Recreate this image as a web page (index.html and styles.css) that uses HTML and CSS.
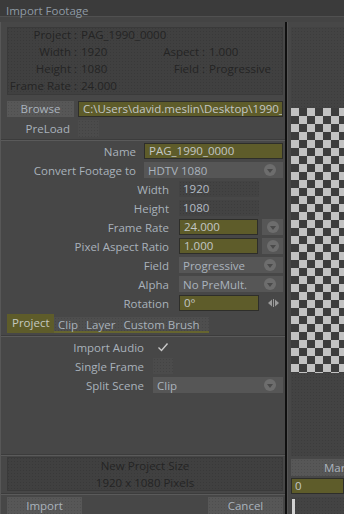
FILE: index.html
```html
<!DOCTYPE html>
<html>
<head>
<meta charset="utf-8">
<link rel="stylesheet" href="styles.css">
</head>
<body>
<div class="titlebar">Import Footage</div>
<div class="title-gap"></div>
<div class="main">
  <div class="left">
    <div class="info tex">
      <span class="ilbl">Project :</span><span class="ival wide">PAG_1990_0000</span>
      <span class="ilbl">Width :</span><span class="ival">1920</span><span class="ilbl">Aspect :</span><span class="ival">1.000</span>
      <span class="ilbl">Height :</span><span class="ival">1080</span><span class="ilbl">Field :</span><span class="ival">Progressive</span>
      <span class="ilbl">Frame Rate :</span><span class="ival wide">24.000</span>
    </div>

    <div class="brow">
      <div class="btn tex browse">Browse</div>
      <div class="olive path">C:\Users\david.meslin\Desktop\1990_0000</div>
    </div>
    <div class="prow">
      <span class="lbl lbl-pre">PreLoad</span>
      <span class="chk tex"></span>
    </div>

    <div class="sep"></div>

    <div class="frow">
      <span class="lbl lbl-a">Name</span>
      <div class="olive grow">PAG_1990_0000</div>
    </div>
    <div class="frow">
      <span class="lbl lbl-a">Convert Footage to</span>
      <div class="dd grow"><span>HDTV 1080</span><span class="circ"></span></div>
    </div>
    <div class="frow">
      <span class="lbl lbl-b">Width</span>
      <div class="dark tex fld">1920</div>
    </div>
    <div class="frow">
      <span class="lbl lbl-b">Height</span>
      <div class="dark tex fld">1080</div>
    </div>
    <div class="frow">
      <span class="lbl lbl-b">Frame Rate</span>
      <div class="olive fld">24.000</div>
      <div class="cbtn"><span class="circ"></span></div>
    </div>
    <div class="frow">
      <span class="lbl lbl-b">Pixel Aspect Ratio</span>
      <div class="olive fld">1.000</div>
      <div class="cbtn"><span class="circ"></span></div>
    </div>
    <div class="frow">
      <span class="lbl lbl-b">Field</span>
      <div class="dd grow"><span>Progressive</span><span class="circ"></span></div>
    </div>
    <div class="frow">
      <span class="lbl lbl-b">Alpha</span>
      <div class="dd grow"><span>No PreMult.</span><span class="circ"></span></div>
    </div>
    <div class="frow">
      <span class="lbl lbl-b">Rotation</span>
      <div class="olive fld">0°</div>
      <svg class="spin" width="11" height="8" viewBox="0 0 11 8">
        <path d="M0 4L4 0.5V7.5Z" fill="#9a9a9a"/>
        <rect x="5" y="0" width="1" height="8" fill="#9a9a9a"/>
        <path d="M11 4L7 0.5V7.5Z" fill="#9a9a9a"/>
      </svg>
    </div>

    <div class="tabs">
      <div class="tab active">Project</div>
      <div class="tabstrip tex">
        <span class="tab">Clip</span>
        <span class="tab">Layer</span>
        <span class="tab">Custom Brush</span>
      </div>
    </div>

    <div class="sep"></div>

    <div class="frow">
      <span class="lbl lbl-c">Import Audio</span>
      <span class="chk checked">
        <svg width="12" height="10" viewBox="0 0 12 10"><path d="M1.5 5.5L4.5 8.5L10.5 1.5" fill="none" stroke="#c9c9c9" stroke-width="1.4"/></svg>
      </span>
    </div>
    <div class="frow">
      <span class="lbl lbl-c">Single Frame</span>
      <span class="chk tex"></span>
    </div>
    <div class="frow">
      <span class="lbl lbl-c">Split Scene</span>
      <div class="dd grow"><span>Clip</span><span class="circ"></span></div>
    </div>

    <div class="spacer"></div>
    <div class="sep sep-b"></div>

    <div class="newsize tex">
      <div>New Project Size</div>
      <div>1920 x 1080 Pixels</div>
    </div>

    <div class="sep sep-c"></div>

    <div class="buttons">
      <div class="btn tex bbtn">Import</div>
      <div class="btn tex bbtn">Cancel</div>
    </div>
  </div>

  <div class="divider"></div>

  <div class="right">
    <div class="rtop tex"></div>
    <div class="checker"></div>
    <div class="rbot tex"></div>
    <div class="btn tex mar">Mar</div>
    <div class="olive rfield">0</div>
    <div class="slider tex"><span class="handle"></span></div>
  </div>
</div>
</body>
</html>
```

FILE: styles.css
```css
html, body {
  margin: 0;
  padding: 0;
}

body {
  width: 344px;
  height: 514px;
  overflow: hidden;
  background: #474747;
  font-family: "Open Sans", "Noto Sans", sans-serif;
  font-size: 11.5px;
  color: #a9b2bb;
}

.tex {
  background-image: radial-gradient(rgba(0, 0, 0, 0.10) 0.7px, transparent 0.9px);
  background-size: 3px 3px;
}

.titlebar {
  box-sizing: border-box;
  height: 17px;
  line-height: 17px;
  padding: 2px 0 0 6px;
  background: #3b3b3b;
  color: #8f9aa4;
  border-bottom: 1px solid #505050;
  overflow: visible;
}

.title-gap {
  height: 5px;
  background: #444444;
}

.main {
  display: flex;
  height: 492px;
}

.left {
  box-sizing: border-box;
  width: 285px;
  padding: 0 2px 0 6px;
  border-left: 1px solid #575757;
  display: flex;
  flex-direction: column;
}

.divider {
  width: 2px;
  background: #101010;
}

.right {
  box-sizing: border-box;
  width: 57px;
  padding-left: 3px;
  display: flex;
  flex-direction: column;
  border-left: 1px solid #545454;
}

/* info box */
.info {
  margin-top: 5px;
  height: 68px;
  box-sizing: border-box;
  background-color: #404040;
  box-shadow: inset 0 0 0 1px #3a3a3a;
  display: grid;
  grid-template-columns: 70px 61px 67px 1fr;
  grid-auto-rows: 17px;
  align-items: start;
  line-height: 15px;
  color: #242424;
  white-space: nowrap;
}

.ilbl {
  text-align: right;
}

.ival {
  padding-left: 4px;
}

.ival.wide {
  grid-column: 2 / 5;
}

/* generic widgets */
.btn {
  background-color: #575757;
  color: #aab3bd;
  text-align: center;
  line-height: 16px;
}

.olive {
  box-sizing: border-box;
  background: #5e5c2a;
  border: 1px solid #2e2e2a;
  color: #c3c7c6;
  padding-left: 3px;
  line-height: 14px;
  white-space: nowrap;
  overflow: hidden;
}

.dark {
  box-sizing: border-box;
  background-color: #434343;
  color: #b3bcc5;
  padding-left: 4px;
  line-height: 16px;
}

.dd {
  box-sizing: border-box;
  background: #565656;
  color: #aab3bd;
  padding: 0 7px 0 4px;
  display: flex;
  align-items: center;
  justify-content: space-between;
  height: 16px;
}

.circ {
  width: 12px;
  height: 12px;
  border-radius: 50%;
  background: #6d6d6d;
  display: flex;
  align-items: center;
  justify-content: center;
}

.circ::after {
  content: "";
  width: 0;
  height: 0;
  margin-top: 1px;
  border-left: 3.5px solid transparent;
  border-right: 3.5px solid transparent;
  border-top: 4px solid #4a4a4a;
}

.cbtn {
  width: 21px;
  height: 16px;
  margin-left: 4px;
  background: #565656;
  display: flex;
  align-items: center;
  justify-content: center;
}

.chk {
  width: 20px;
  height: 16px;
  background-color: #4b4b4b;
  display: flex;
  align-items: center;
  justify-content: center;
}

.chk.checked {
  background: transparent;
}

/* rows */
.brow {
  display: flex;
  margin-top: 6px;
  height: 16px;
}

.browse {
  width: 67px;
}

.path {
  flex: 1;
  margin-left: 4px;
  padding-left: 4px;
  line-height: 14px;
}

.prow {
  display: flex;
  align-items: center;
  margin-top: 3px;
  height: 17px;
}

.lbl {
  text-align: right;
  white-space: nowrap;
  flex: none;
}

.lbl-pre {
  width: 63px;
  margin-right: 8px;
}

.prow .chk {
  width: 21px;
  height: 17px;
}

.sep {
  margin: 2px -2px 0 -6px;
  height: 0;
  border-top: 1px solid #3c3c3c;
  border-bottom: 1px solid #5a5a5a;
}

.frow {
  display: flex;
  align-items: center;
  margin-top: 3px;
  height: 16px;
}

.sep + .frow {
  margin-top: 2px;
}

.lbl-a {
  width: 129px;
  margin-right: 8px;
}

.lbl-b {
  width: 162px;
  margin-right: 10px;
}

.lbl-c {
  width: 137px;
  margin-right: 9px;
}

.grow {
  flex: 1;
  height: 16px;
}

.frow .olive {
  height: 16px;
  padding-left: 4px;
}

.fld {
  width: 80px;
  height: 16px;
}

.spin {
  margin-left: 9px;
}

/* tabs */
.tabs {
  display: flex;
  align-items: flex-end;
  margin-top: 3px;
  height: 19px;
}

.tab.active {
  box-sizing: border-box;
  width: 47px;
  height: 19px;
  line-height: 18px;
  padding-left: 5px;
  background: #5e5c2a;
  color: #c4c8c0;
}

.tabstrip {
  display: flex;
  box-sizing: border-box;
  height: 16px;
  padding: 0 5px 0 0;
  background-color: #4e4e4e;
  border-bottom: 2px solid #66652f;
  line-height: 15px;
}

.tabstrip .tab {
  padding: 0 4px;
}

.spacer {
  flex: 1;
}

.sep-b {
  margin-top: 0;
}

.newsize {
  margin-top: 1px;
  height: 34px;
  box-sizing: border-box;
  background-color: #404040;
  box-shadow: inset 0 0 0 1px #3a3a3a;
  color: #242424;
  text-align: center;
  line-height: 17px;
}

.sep-c {
  margin-top: 2px;
}

.buttons {
  display: flex;
  justify-content: space-between;
  margin-top: 2px;
  height: 17px;
}

.bbtn {
  width: 75px;
  height: 17px;
  line-height: 17px;
}

/* right panel */
.rtop {
  margin-top: 5px;
  height: 81px;
  background-color: #434343;
}

.checker {
  height: 265px;
  background-color: #c2c2c2;
  background-image:
    linear-gradient(45deg, #3d3d3d 25%, transparent 25%, transparent 75%, #3d3d3d 75%),
    linear-gradient(45deg, #3d3d3d 25%, transparent 25%, transparent 75%, #3d3d3d 75%);
  background-size: 16px 16px;
  background-position: 0 0, 8px 8px;
}

.rbot {
  height: 83px;
  background-color: #434343;
}

.mar {
  margin-top: 3px;
  height: 17px;
  line-height: 17px;
  text-align: left;
  padding-left: 33px;
  white-space: nowrap;
  overflow: hidden;
}

.rfield {
  margin-top: 2px;
  height: 16px;
  line-height: 14px;
}

.slider {
  margin-top: 3px;
  flex: 1;
  background-color: #434343;
  position: relative;
}

.handle {
  position: absolute;
  left: 1px;
  top: 2px;
  width: 3px;
  bottom: 0;
  background: #d2d2d2;
}
```
